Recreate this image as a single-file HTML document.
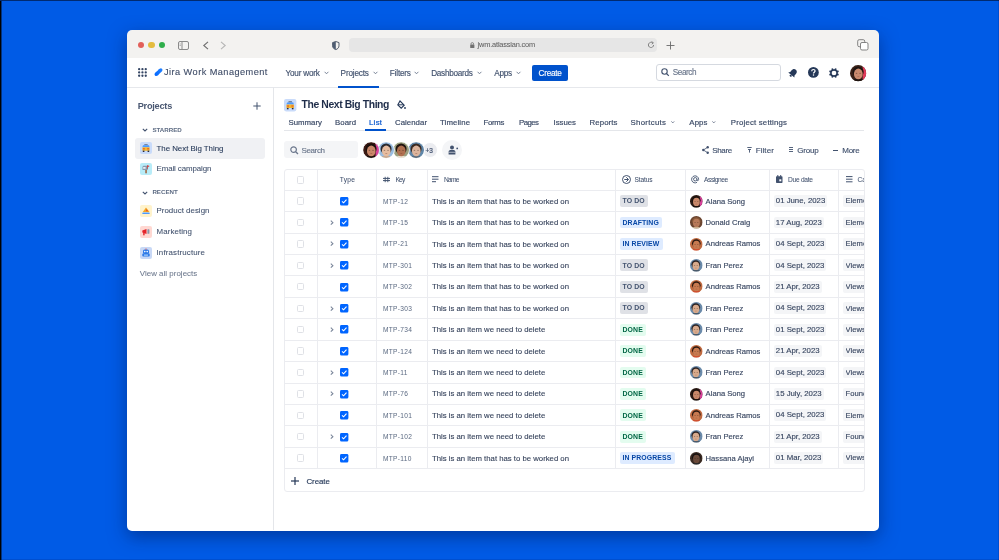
<!DOCTYPE html>
<html><head><meta charset="utf-8"><style>
html,body{margin:0;padding:0;width:999px;height:560px;overflow:hidden}
body{position:relative;font-family:"Liberation Sans",sans-serif}
.a{position:absolute}
.t{position:absolute;white-space:nowrap}
svg.a{overflow:visible}
</style></head><body><div class="a" style="left:0;top:0;width:999px;height:560px;filter:blur(0.25px)">
<div class="a" style="left:0;top:0;width:999px;height:560px;background:#005BE6"></div>
<div class="a" style="left:0px;top:0px;width:1px;height:560px;background:#000"></div>
<div class="a" style="left:1px;top:0px;width:1px;height:560px;background:rgba(0,0,0,0.45)"></div>
<div class="a" style="left:0px;top:0px;width:999px;height:1px;background:#002a70"></div>
<div class="a" style="left:998px;top:0px;width:1px;height:560px;background:rgba(0,0,40,0.12)"></div>
<div class="a" style="left:0px;top:559px;width:999px;height:1px;background:rgba(0,0,40,0.12)"></div>
<div class="a" style="left:127px;top:30px;width:752px;height:500.5px;border-radius:5px;background:linear-gradient(#F3F2F0 0,#F3F2F0 28px,#fff 28px);box-shadow:0 6px 18px rgba(0,25,90,0.5)"></div>
<div class="a" style="left:137.7px;top:41.6px;width:6.8px;height:6.8px;border-radius:50%;background:#E2605A"></div>
<div class="a" style="left:148.4px;top:41.6px;width:6.8px;height:6.8px;border-radius:50%;background:#E4BC3F"></div>
<div class="a" style="left:158.6px;top:41.6px;width:6.8px;height:6.8px;border-radius:50%;background:#2FAE4B"></div>
<svg class="a" style="left:178px;top:41px" width="11" height="9" viewBox="0 0 11 9"><rect x="0.5" y="0.5" width="10" height="8" rx="1.5" fill="none" stroke="#8a8a8a" stroke-width="1"/><line x1="4" y1="1" x2="4" y2="8" stroke="#8a8a8a" stroke-width="1"/><line x1="1.5" y1="3" x2="3" y2="3" stroke="#aaa" stroke-width="0.8"/><line x1="1.5" y1="4.5" x2="3" y2="4.5" stroke="#aaa" stroke-width="0.8"/></svg>
<svg class="a" style="left:202px;top:41px" width="8" height="9" viewBox="0 0 8 9"><polyline points="6,0.8 1.8,4.5 6,8.2" fill="none" stroke="#6d6d6d" stroke-width="1.1"/></svg>
<svg class="a" style="left:219px;top:41px" width="8" height="9" viewBox="0 0 8 9"><polyline points="2,0.8 6.2,4.5 2,8.2" fill="none" stroke="#b5b5b5" stroke-width="1.1"/></svg>
<svg class="a" style="left:331.5px;top:40.7px" width="7.6" height="9" viewBox="0 0 7.6 9"><path d="M3.8 0.5 L7 1.6 L7 4.8 C7 6.8 5.6 8 3.8 8.6 C2 8 0.6 6.8 0.6 4.8 L0.6 1.6 Z" fill="none" stroke="#56606e" stroke-width="1"/><path d="M3.8 0.5 L3.8 8.6 C2 8 0.6 6.8 0.6 4.8 L0.6 1.6 Z" fill="#4f5d72"/></svg>
<div class="a" style="left:348.8px;top:38.3px;width:308.6px;height:13.9px;border-radius:4px;background:#E6E6E6"></div>
<svg class="a" style="left:470.2px;top:42px" width="4.6" height="6.2" viewBox="0 0 4.6 6.2"><rect x="0.2" y="2.4" width="4.2" height="3.6" rx="0.6" fill="#707070"/><path d="M1 2.6 V1.9 A1.3 1.3 0 0 1 3.6 1.9 V2.6" fill="none" stroke="#707070" stroke-width="0.8"/></svg>
<div class="t" style="left:477.60px;top:41.41px;font-size:7.4px;line-height:8.88px;color:#606060;-webkit-text-stroke:0.05px #606060;letter-spacing:-0.178px;">jwm.atlassian.com</div>
<svg class="a" style="left:647px;top:41px" width="8" height="8" viewBox="0 0 8 8"><path d="M6.6 4 A2.6 2.6 0 1 1 5.6 1.9" fill="none" stroke="#777" stroke-width="0.9"/><path d="M4.6 0.6 L6.4 1.8 L4.8 3.2" fill="none" stroke="#777" stroke-width="0.9"/></svg>
<svg class="a" style="left:666.2px;top:40.6px" width="9" height="9" viewBox="0 0 9 9"><line x1="4.5" y1="0.5" x2="4.5" y2="8.5" stroke="#6a6a6a" stroke-width="0.9"/><line x1="0.5" y1="4.5" x2="8.5" y2="4.5" stroke="#6a6a6a" stroke-width="0.9"/></svg>
<svg class="a" style="left:857px;top:39px" width="12" height="12" viewBox="0 0 12 12"><rect x="0.7" y="0.7" width="7" height="7" rx="1.5" fill="#F3F2F0" stroke="#777" stroke-width="0.9"/><rect x="3.5" y="3.5" width="7.5" height="7.5" rx="1.5" fill="#fff" stroke="#777" stroke-width="0.9"/></svg>
<div class="a" style="left:127px;top:87px;width:752px;height:1px;background:#E6E8EC"></div>
<svg class="a" style="left:138.4px;top:68.4px" width="9" height="9" viewBox="0 0 9 9"><circle cx="1.15" cy="1.15" r="1.15" fill="#344563"/><circle cx="1.15" cy="4.45" r="1.15" fill="#344563"/><circle cx="1.15" cy="7.75" r="1.15" fill="#344563"/><circle cx="4.45" cy="1.15" r="1.15" fill="#344563"/><circle cx="4.45" cy="4.45" r="1.15" fill="#344563"/><circle cx="4.45" cy="7.75" r="1.15" fill="#344563"/><circle cx="7.75" cy="1.15" r="1.15" fill="#344563"/><circle cx="7.75" cy="4.45" r="1.15" fill="#344563"/><circle cx="7.75" cy="7.75" r="1.15" fill="#344563"/></svg>
<svg class="a" style="left:154px;top:67.5px" width="9" height="9" viewBox="0 0 9 9"><defs><linearGradient id="jg" x1="0" y1="1" x2="1" y2="0"><stop offset="0" stop-color="#0065FF"/><stop offset="1" stop-color="#2684FF"/></linearGradient></defs><path d="M1.2 7.8 C0.2 7.2 0.4 5.6 1.4 4.6 L3.8 2.6 C4.6 1.2 6 0.2 7.4 0.4 C8.8 0.8 8.8 2.4 7.8 3.6 L5.6 5.6 C4.8 7 2.8 8.6 1.2 7.8 Z" fill="url(#jg)"/></svg>
<div class="t" style="left:164.00px;top:67.14px;font-size:9.2px;line-height:11.04px;color:#3d4b66;-webkit-text-stroke:0.1px #3d4b66;letter-spacing:0.451px;">Jira Work Management</div>
<div class="t" style="left:285.50px;top:68.77px;font-size:8.2px;line-height:9.84px;color:#42526E;-webkit-text-stroke:0.15px #42526E;letter-spacing:-0.208px;">Your work</div>
<svg class="a" style="left:323.5px;top:71.2px" width="5" height="4" viewBox="0 0 5 4"><polyline points="0.6,0.8 2.5,2.8 4.4,0.8" fill="none" stroke="#6B778C" stroke-width="0.9"/></svg>
<div class="t" style="left:340.60px;top:68.77px;font-size:8.2px;line-height:9.84px;color:#42526E;-webkit-text-stroke:0.15px #42526E;letter-spacing:-0.175px;">Projects</div>
<svg class="a" style="left:372.7px;top:71.2px" width="5" height="4" viewBox="0 0 5 4"><polyline points="0.6,0.8 2.5,2.8 4.4,0.8" fill="none" stroke="#6B778C" stroke-width="0.9"/></svg>
<div class="t" style="left:389.80px;top:68.77px;font-size:8.2px;line-height:9.84px;color:#42526E;-webkit-text-stroke:0.15px #42526E;letter-spacing:-0.187px;">Filters</div>
<svg class="a" style="left:414.2px;top:71.2px" width="5" height="4" viewBox="0 0 5 4"><polyline points="0.6,0.8 2.5,2.8 4.4,0.8" fill="none" stroke="#6B778C" stroke-width="0.9"/></svg>
<div class="t" style="left:431.20px;top:68.77px;font-size:8.2px;line-height:9.84px;color:#42526E;-webkit-text-stroke:0.15px #42526E;letter-spacing:-0.280px;">Dashboards</div>
<svg class="a" style="left:477.4px;top:71.2px" width="5" height="4" viewBox="0 0 5 4"><polyline points="0.6,0.8 2.5,2.8 4.4,0.8" fill="none" stroke="#6B778C" stroke-width="0.9"/></svg>
<div class="t" style="left:494.20px;top:68.77px;font-size:8.2px;line-height:9.84px;color:#42526E;-webkit-text-stroke:0.15px #42526E;letter-spacing:-0.264px;">Apps</div>
<svg class="a" style="left:515.5px;top:71.2px" width="5" height="4" viewBox="0 0 5 4"><polyline points="0.6,0.8 2.5,2.8 4.4,0.8" fill="none" stroke="#6B778C" stroke-width="0.9"/></svg>
<div class="a" style="left:338.3px;top:85.5px;width:40.6px;height:2px;background:#0052CC"></div>
<div class="a" style="left:532.2px;top:64.8px;width:36px;height:16px;border-radius:2px;background:#0052CC"></div>
<div class="t" style="left:538.60px;top:68.57px;font-size:8.2px;line-height:9.84px;color:#ffffff;-webkit-text-stroke:0.15px #ffffff;letter-spacing:-0.283px;">Create</div>
<div class="a" style="left:656px;top:64px;width:124.7px;height:17.3px;border-radius:3px;background:#fff;border:1px solid #D5D9E0;box-sizing:border-box"></div>
<svg class="a" style="left:661.3px;top:68.2px" width="8.5" height="8.5" viewBox="0 0 8.5 8.5"><circle cx="3.5" cy="3.5" r="2.7" fill="none" stroke="#42526E" stroke-width="1.1"/><line x1="5.5" y1="5.5" x2="7.8" y2="7.8" stroke="#42526E" stroke-width="1.2"/></svg>
<div class="t" style="left:672.80px;top:68.17px;font-size:8.2px;line-height:9.84px;color:#6B778C;-webkit-text-stroke:0.15px #6B778C;letter-spacing:-0.436px;">Search</div>
<svg class="a" style="left:787.5px;top:67.5px" width="10" height="10" viewBox="0 0 10 10"><g transform="rotate(40 5 5)"><path d="M5 0.6 C3 0.6 2.2 2.2 2.2 3.8 V6 L1 7.6 H9 L7.8 6 V3.8 C7.8 2.2 7 0.6 5 0.6 Z" fill="#253858"/><ellipse cx="5" cy="8.6" rx="1.2" ry="0.9" fill="#253858"/></g></svg>
<svg class="a" style="left:808.2px;top:67.4px" width="10.8" height="10.8" viewBox="0 0 10.8 10.8"><circle cx="5.4" cy="5.4" r="5.4" fill="#253858"/><path d="M3.7 4.2 C3.7 3.1 4.5 2.5 5.4 2.5 C6.4 2.5 7.1 3.1 7.1 4 C7.1 5.2 5.5 5.3 5.5 6.5" fill="none" stroke="#fff" stroke-width="1.2"/><circle cx="5.5" cy="8.1" r="0.75" fill="#fff"/></svg>
<svg class="a" style="left:829.2px;top:67.6px" width="10" height="10" viewBox="0 0 10 10"><g transform="translate(5 5)"><rect x="-0.9" y="-4.9" width="1.8" height="2" fill="#253858" transform="rotate(22.5)"/><rect x="-0.9" y="-4.9" width="1.8" height="2" fill="#253858" transform="rotate(67.5)"/><rect x="-0.9" y="-4.9" width="1.8" height="2" fill="#253858" transform="rotate(112.5)"/><rect x="-0.9" y="-4.9" width="1.8" height="2" fill="#253858" transform="rotate(157.5)"/><rect x="-0.9" y="-4.9" width="1.8" height="2" fill="#253858" transform="rotate(202.5)"/><rect x="-0.9" y="-4.9" width="1.8" height="2" fill="#253858" transform="rotate(247.5)"/><rect x="-0.9" y="-4.9" width="1.8" height="2" fill="#253858" transform="rotate(292.5)"/><rect x="-0.9" y="-4.9" width="1.8" height="2" fill="#253858" transform="rotate(337.5)"/><circle r="3.1" fill="none" stroke="#253858" stroke-width="1.5"/></g></svg>
<svg class="a" style="left:849.85px;top:64.64999999999999px" width="16.3" height="16.3" viewBox="0 0 16.3 16.3"><defs><clipPath id="av1"><circle cx="8.15" cy="8.15" r="8.15"/></clipPath></defs><g clip-path="url(#av1)"><rect width="16.3" height="16.3" fill="#3a2218"/><rect x="12.714" y="0" width="3.5860000000000003" height="16.3" fill="#e23a5a"/><ellipse cx="8.15" cy="16.626" rx="6.9275" ry="2.8525" fill="#1f1410"/><ellipse cx="8.15" cy="6.9275" rx="5.542000000000001" ry="5.3790000000000004" fill="#1f1410"/><ellipse cx="8.313" cy="8.965000000000002" rx="4.401000000000001" ry="5.3790000000000004" fill="#c98a6e"/><ellipse cx="6.5200000000000005" cy="8.313" rx="0.8965000000000001" ry="0.489" fill="#2a1a12" opacity="0.55"/><ellipse cx="10.106" cy="8.313" rx="0.8965000000000001" ry="0.489" fill="#2a1a12" opacity="0.55"/><ellipse cx="8.313" cy="11.573" rx="1.304" ry="0.40750000000000003" fill="#7a3a2a" opacity="0.45"/></g></svg>
<div class="a" style="left:273px;top:87px;width:1px;height:443px;background:#E4E6EA"></div>
<div class="t" style="left:137.70px;top:101.04px;font-size:9.2px;line-height:11.04px;color:#4a5872;font-weight:bold;letter-spacing:-0.244px;">Projects</div>
<svg class="a" style="left:252.5px;top:102px" width="8" height="8" viewBox="0 0 8 8"><line x1="4" y1="0.3" x2="4" y2="7.7" stroke="#42526E" stroke-width="1"/><line x1="0.3" y1="4" x2="7.7" y2="4" stroke="#42526E" stroke-width="1"/></svg>
<svg class="a" style="left:141.5px;top:127.5px" width="6" height="4" viewBox="0 0 6 4"><polyline points="0.8,0.8 3,3 5.2,0.8" fill="none" stroke="#42526E" stroke-width="1.1"/></svg>
<div class="t" style="left:152.40px;top:125.53px;font-size:6.2px;line-height:7.44px;color:#5E6C84;font-weight:bold;letter-spacing:-0.001px;">STARRED</div>
<div class="a" style="left:135px;top:137.6px;width:130px;height:21px;border-radius:3px;background:#F0F1F4"></div>
<svg class="a" style="left:139.9px;top:141.9px" width="12" height="12" viewBox="0 0 12 12"><g transform="scale(1.0)"><rect width="12" height="12" rx="2" fill="#C9DBFA"/><path d="M4.5 2.2 H7.5 L8 3.3 H4 Z" fill="#5a6a80"/><path d="M3 3.3 H9 L9.6 5.3 H2.4 Z" fill="#4C9AFF"/><rect x="2.3" y="5.3" width="7.4" height="3.4" rx="0.6" fill="#F5B82E"/><rect x="3" y="6.2" width="1.8" height="1.2" fill="#E8542E"/><rect x="7.2" y="6.2" width="1.8" height="1.2" fill="#E8542E"/><rect x="2.8" y="8.6" width="1.6" height="1.4" fill="#2a2a3a"/><rect x="7.6" y="8.6" width="1.6" height="1.4" fill="#2a2a3a"/></g></svg>
<div class="t" style="left:156.50px;top:143.75px;font-size:7.9px;line-height:9.48px;color:#253858;-webkit-text-stroke:0.08px #253858;letter-spacing:-0.028px;">The Next Big Thing</div>
<svg class="a" style="left:139.9px;top:162.6px" width="12" height="12" viewBox="0 0 12 12"><g transform="scale(1.0)"><rect width="12" height="12" rx="2" fill="#B8ECF8"/><path d="M2.5 4.2 C2.5 3.2 3.3 2.8 4.2 2.8 H7.5 V7 H2.5 Z" fill="#8a9aac"/><rect x="3.2" y="4" width="2.4" height="1.8" fill="#e8eef4"/><path d="M7.5 2.2 L9.6 3 L7.5 4.6 Z" fill="#E8342E"/><rect x="7.2" y="2.2" width="0.6" height="4" fill="#c02a2a"/><rect x="5.3" y="7" width="1.5" height="3.3" fill="#A0603a"/></g></svg>
<div class="t" style="left:156.50px;top:164.05px;font-size:7.9px;line-height:9.48px;color:#42526E;-webkit-text-stroke:0.08px #42526E;letter-spacing:-0.093px;">Email campaign</div>
<svg class="a" style="left:141.5px;top:190.5px" width="6" height="4" viewBox="0 0 6 4"><polyline points="0.8,0.8 3,3 5.2,0.8" fill="none" stroke="#42526E" stroke-width="1.1"/></svg>
<div class="t" style="left:152.40px;top:188.43px;font-size:6.2px;line-height:7.44px;color:#5E6C84;font-weight:bold;letter-spacing:0.002px;">RECENT</div>
<svg class="a" style="left:139.9px;top:204.8px" width="12" height="12" viewBox="0 0 12 12"><g transform="scale(1.0)"><rect width="12" height="12" rx="2" fill="#FFF3CC"/><path d="M6 2.5 L9.5 7 H2.8 Z" fill="#F5A623"/><path d="M6.5 4 L8.2 6.2 H6 Z" fill="#E84A2E"/><rect x="2.3" y="7.6" width="7.4" height="1.5" rx="0.7" fill="#4C9AFF"/></g></svg>
<div class="t" style="left:156.50px;top:206.25px;font-size:7.9px;line-height:9.48px;color:#42526E;-webkit-text-stroke:0.08px #42526E;letter-spacing:0.023px;">Product design</div>
<svg class="a" style="left:139.9px;top:225.7px" width="12" height="12" viewBox="0 0 12 12"><g transform="scale(1.0)"><rect width="12" height="12" rx="2" fill="#FFD8D2"/><path d="M2.3 4.5 L6.5 3 V8 L2.3 6.5 Z" fill="#E5242A"/><rect x="3.2" y="6.5" width="1.4" height="2.8" fill="#E5242A"/><rect x="7.4" y="3.2" width="2" height="4.6" rx="0.5" fill="#8a96a8"/></g></svg>
<div class="t" style="left:156.50px;top:227.15px;font-size:7.9px;line-height:9.48px;color:#42526E;-webkit-text-stroke:0.08px #42526E;letter-spacing:0.102px;">Marketing</div>
<svg class="a" style="left:139.9px;top:246.7px" width="12" height="12" viewBox="0 0 12 12"><g transform="scale(1.0)"><rect width="12" height="12" rx="2" fill="#C8D8F6"/><rect x="3" y="2.5" width="6" height="4.5" rx="1.5" fill="#2F7BE8"/><circle cx="4.8" cy="4.6" r="0.8" fill="#fff"/><circle cx="7.2" cy="4.6" r="0.8" fill="#fff"/><rect x="2.3" y="6.6" width="7.4" height="3" rx="0.8" fill="#2F7BE8"/><rect x="4" y="7.6" width="4" height="1" fill="#bfe0ff"/><rect x="5.6" y="1.5" width="0.8" height="1.2" fill="#E5342A"/></g></svg>
<div class="t" style="left:156.50px;top:248.15px;font-size:7.9px;line-height:9.48px;color:#42526E;-webkit-text-stroke:0.08px #42526E;letter-spacing:0.151px;">Infrastructure</div>
<div class="t" style="left:139.80px;top:268.75px;font-size:7.9px;line-height:9.48px;color:#6B778C;-webkit-text-stroke:0.05px #6B778C;letter-spacing:0.035px;">View all projects</div>
<svg class="a" style="left:283.9px;top:98.9px" width="12.4" height="12.4" viewBox="0 0 12.4 12.4"><g transform="scale(1.0333333333333334)"><rect width="12" height="12" rx="2" fill="#C9DBFA"/><path d="M4.5 2.2 H7.5 L8 3.3 H4 Z" fill="#5a6a80"/><path d="M3 3.3 H9 L9.6 5.3 H2.4 Z" fill="#4C9AFF"/><rect x="2.3" y="5.3" width="7.4" height="3.4" rx="0.6" fill="#F5B82E"/><rect x="3" y="6.2" width="1.8" height="1.2" fill="#E8542E"/><rect x="7.2" y="6.2" width="1.8" height="1.2" fill="#E8542E"/><rect x="2.8" y="8.6" width="1.6" height="1.4" fill="#2a2a3a"/><rect x="7.6" y="8.6" width="1.6" height="1.4" fill="#2a2a3a"/></g></svg>
<div class="t" style="left:301.50px;top:99.12px;font-size:10.4px;line-height:12.48px;color:#1f2d4a;font-weight:bold;letter-spacing:-0.397px;">The Next Big Thing</div>
<svg class="a" style="left:396.5px;top:100px" width="9" height="9" viewBox="0 0 9 9"><path d="M3 1 L7.2 5.2 L4.2 8.2 L0.8 4.8 Z" fill="none" stroke="#253858" stroke-width="1.1"/><line x1="1" y1="4.8" x2="7" y2="4.8" stroke="#253858" stroke-width="1"/><circle cx="8" cy="8" r="0.9" fill="#253858"/></svg>
<div class="t" style="left:288.40px;top:117.74px;font-size:7.8px;line-height:9.36px;color:#3B4A66;-webkit-text-stroke:0.18px #3B4A66;letter-spacing:0.038px;">Summary</div>
<div class="t" style="left:335.00px;top:117.74px;font-size:7.8px;line-height:9.36px;color:#3B4A66;-webkit-text-stroke:0.18px #3B4A66;letter-spacing:0.046px;">Board</div>
<div class="t" style="left:369.00px;top:117.74px;font-size:7.8px;line-height:9.36px;color:#0052CC;-webkit-text-stroke:0.18px #0052CC;letter-spacing:0.287px;">List</div>
<div class="t" style="left:395.00px;top:117.74px;font-size:7.8px;line-height:9.36px;color:#3B4A66;-webkit-text-stroke:0.18px #3B4A66;letter-spacing:0.049px;">Calendar</div>
<div class="t" style="left:440.00px;top:117.74px;font-size:7.8px;line-height:9.36px;color:#3B4A66;-webkit-text-stroke:0.18px #3B4A66;letter-spacing:0.116px;">Timeline</div>
<div class="t" style="left:483.50px;top:117.74px;font-size:7.8px;line-height:9.36px;color:#3B4A66;-webkit-text-stroke:0.18px #3B4A66;letter-spacing:-0.275px;">Forms</div>
<div class="t" style="left:519.00px;top:117.74px;font-size:7.8px;line-height:9.36px;color:#3B4A66;-webkit-text-stroke:0.18px #3B4A66;letter-spacing:-0.529px;">Pages</div>
<div class="t" style="left:553.50px;top:117.74px;font-size:7.8px;line-height:9.36px;color:#3B4A66;-webkit-text-stroke:0.18px #3B4A66;letter-spacing:-0.009px;">Issues</div>
<div class="t" style="left:589.50px;top:117.74px;font-size:7.8px;line-height:9.36px;color:#3B4A66;-webkit-text-stroke:0.18px #3B4A66;letter-spacing:0.115px;">Reports</div>
<div class="t" style="left:630.50px;top:117.74px;font-size:7.8px;line-height:9.36px;color:#3B4A66;-webkit-text-stroke:0.18px #3B4A66;letter-spacing:0.319px;">Shortcuts</div>
<div class="t" style="left:689.30px;top:117.74px;font-size:7.8px;line-height:9.36px;color:#3B4A66;-webkit-text-stroke:0.18px #3B4A66;letter-spacing:0.140px;">Apps</div>
<div class="t" style="left:730.80px;top:117.74px;font-size:7.8px;line-height:9.36px;color:#3B4A66;-webkit-text-stroke:0.18px #3B4A66;letter-spacing:0.192px;">Project settings</div>
<svg class="a" style="left:670.6px;top:121px" width="3.6" height="2.4" viewBox="0 0 3.6 2.4"><polyline points="0.4,0.4 1.8,1.9 3.2,0.4" fill="none" stroke="#6B778C" stroke-width="0.9"/></svg>
<svg class="a" style="left:712px;top:121px" width="3.6" height="2.4" viewBox="0 0 3.6 2.4"><polyline points="0.4,0.4 1.8,1.9 3.2,0.4" fill="none" stroke="#6B778C" stroke-width="0.9"/></svg>
<div class="a" style="left:284px;top:129.5px;width:580px;height:1px;background:#E4E6EA"></div>
<div class="a" style="left:365px;top:128.8px;width:21.4px;height:1.8px;background:#0052CC"></div>
<div class="a" style="left:284px;top:141.2px;width:74px;height:17.3px;border-radius:3px;background:#F4F5F7"></div>
<svg class="a" style="left:289.5px;top:146px" width="9" height="9" viewBox="0 0 9 9"><circle cx="3.6" cy="3.6" r="2.8" fill="none" stroke="#6B778C" stroke-width="1.2"/><line x1="5.7" y1="5.7" x2="8" y2="8" stroke="#6B778C" stroke-width="1.3"/></svg>
<div class="t" style="left:301.40px;top:145.66px;font-size:8px;line-height:9.60px;color:#6B778C;-webkit-text-stroke:0.15px #6B778C;letter-spacing:-0.350px;">Search</div>
<div class="a" style="left:421.6px;top:141.7px;width:16.2px;height:16.2px;border-radius:50%;background:#EBECF0;border:1px solid #fff;box-sizing:border-box"></div>
<div class="t" style="left:425.40px;top:146.55px;font-size:6.5px;line-height:7.80px;color:#42526E;-webkit-text-stroke:0.2px #42526E;">+3</div>
<svg class="a" style="left:407.59999999999997px;top:141.70000000000002px" width="16.2" height="16.2" viewBox="0 0 16.2 16.2"><defs><clipPath id="av2"><circle cx="8.1" cy="8.1" r="8.1"/></clipPath></defs><g clip-path="url(#av2)"><rect width="16.2" height="16.2" fill="#5f86a8"/><ellipse cx="8.1" cy="16.524" rx="6.885" ry="2.8349999999999995" fill="#5a6a7a"/><ellipse cx="8.1" cy="6.885" rx="5.508" ry="5.346" fill="#3a2a22"/><ellipse cx="8.262" cy="8.91" rx="4.374" ry="5.346" fill="#dcb49c"/><ellipse cx="6.48" cy="8.262" rx="0.891" ry="0.486" fill="#2a1a12" opacity="0.55"/><ellipse cx="10.043999999999999" cy="8.262" rx="0.891" ry="0.486" fill="#2a1a12" opacity="0.55"/><ellipse cx="8.262" cy="11.501999999999999" rx="1.296" ry="0.405" fill="#7a3a2a" opacity="0.45"/></g><circle cx="8.1" cy="8.1" r="8.4" fill="none" stroke="#fff" stroke-width="0.8"/></svg>
<svg class="a" style="left:392.9px;top:141.70000000000002px" width="16.2" height="16.2" viewBox="0 0 16.2 16.2"><defs><clipPath id="av3"><circle cx="8.1" cy="8.1" r="8.1"/></clipPath></defs><g clip-path="url(#av3)"><rect width="16.2" height="16.2" fill="#9aa080"/><ellipse cx="8.1" cy="16.524" rx="6.885" ry="2.8349999999999995" fill="#e8e0d0"/><ellipse cx="8.1" cy="6.885" rx="5.508" ry="5.346" fill="#201410"/><ellipse cx="8.262" cy="8.91" rx="4.374" ry="5.346" fill="#b07050"/><ellipse cx="6.48" cy="8.262" rx="0.891" ry="0.486" fill="#2a1a12" opacity="0.55"/><ellipse cx="10.043999999999999" cy="8.262" rx="0.891" ry="0.486" fill="#2a1a12" opacity="0.55"/><ellipse cx="8.262" cy="11.501999999999999" rx="1.296" ry="0.405" fill="#7a3a2a" opacity="0.45"/></g><circle cx="8.1" cy="8.1" r="8.4" fill="none" stroke="#fff" stroke-width="0.8"/></svg>
<svg class="a" style="left:378.4px;top:141.70000000000002px" width="16.2" height="16.2" viewBox="0 0 16.2 16.2"><defs><clipPath id="av4"><circle cx="8.1" cy="8.1" r="8.1"/></clipPath></defs><g clip-path="url(#av4)"><rect width="16.2" height="16.2" fill="#98bce0"/><ellipse cx="8.1" cy="16.524" rx="6.885" ry="2.8349999999999995" fill="#c8a890"/><ellipse cx="8.1" cy="6.885" rx="5.508" ry="5.346" fill="#2a2a30"/><ellipse cx="8.262" cy="8.91" rx="4.374" ry="5.346" fill="#e6bca0"/><ellipse cx="6.48" cy="8.262" rx="0.891" ry="0.486" fill="#2a1a12" opacity="0.55"/><ellipse cx="10.043999999999999" cy="8.262" rx="0.891" ry="0.486" fill="#2a1a12" opacity="0.55"/><ellipse cx="8.262" cy="11.501999999999999" rx="1.296" ry="0.405" fill="#7a3a2a" opacity="0.45"/></g><circle cx="8.1" cy="8.1" r="8.4" fill="none" stroke="#fff" stroke-width="0.8"/></svg>
<svg class="a" style="left:362.79999999999995px;top:141.70000000000002px" width="16.2" height="16.2" viewBox="0 0 16.2 16.2"><defs><clipPath id="av5"><circle cx="8.1" cy="8.1" r="8.1"/></clipPath></defs><g clip-path="url(#av5)"><rect width="16.2" height="16.2" fill="#3a1a14"/><rect x="12.636" y="0" width="3.564" height="16.2" fill="#d8409a"/><ellipse cx="8.1" cy="16.524" rx="6.885" ry="2.8349999999999995" fill="#1a100c"/><ellipse cx="8.1" cy="6.885" rx="5.508" ry="5.346" fill="#1a100c"/><ellipse cx="8.262" cy="8.91" rx="4.374" ry="5.346" fill="#c9886a"/><ellipse cx="6.48" cy="8.262" rx="0.891" ry="0.486" fill="#2a1a12" opacity="0.55"/><ellipse cx="10.043999999999999" cy="8.262" rx="0.891" ry="0.486" fill="#2a1a12" opacity="0.55"/><ellipse cx="8.262" cy="11.501999999999999" rx="1.296" ry="0.405" fill="#7a3a2a" opacity="0.45"/></g><circle cx="8.1" cy="8.1" r="8.4" fill="none" stroke="#fff" stroke-width="0.8"/></svg>
<div class="a" style="left:442.4px;top:140px;width:20px;height:20px;border-radius:50%;background:#F4F5F7"></div>
<svg class="a" style="left:447.5px;top:145px" width="11" height="10" viewBox="0 0 11 10"><circle cx="4" cy="2.4" r="2" fill="#42526E"/><path d="M0.6 9.5 V7 C0.6 5.6 1.6 5 3 5 H5 C6.4 5 7.4 5.6 7.4 7 V9.5 Z" fill="#42526E"/><line x1="0.6" y1="7.3" x2="7.4" y2="7.3" stroke="#F4F5F7" stroke-width="0.6"/><circle cx="9.2" cy="3.4" r="0.9" fill="#42526E"/></svg>
<svg class="a" style="left:702px;top:146px" width="7" height="8" viewBox="0 0 7 8"><circle cx="5.7" cy="1.3" r="1.2" fill="#42526E"/><circle cx="1.3" cy="4" r="1.2" fill="#42526E"/><circle cx="5.7" cy="6.7" r="1.2" fill="#42526E"/><polyline points="5.7,1.3 1.3,4 5.7,6.7" fill="none" stroke="#42526E" stroke-width="0.8"/></svg>
<div class="t" style="left:712.20px;top:145.56px;font-size:8px;line-height:9.60px;color:#42526E;-webkit-text-stroke:0.15px #42526E;letter-spacing:-0.312px;">Share</div>
<svg class="a" style="left:747px;top:147px" width="5" height="6" viewBox="0 0 5 6"><line x1="0.3" y1="0.5" x2="4.7" y2="0.5" stroke="#42526E" stroke-width="0.9"/><line x1="1" y1="2.5" x2="4" y2="2.5" stroke="#42526E" stroke-width="0.9"/><line x1="2.5" y1="2.5" x2="2.5" y2="5.6" stroke="#42526E" stroke-width="0.9"/></svg>
<div class="t" style="left:755.80px;top:145.56px;font-size:8px;line-height:9.60px;color:#42526E;-webkit-text-stroke:0.15px #42526E;letter-spacing:0.044px;">Filter</div>
<svg class="a" style="left:788.5px;top:147.3px" width="4" height="5" viewBox="0 0 4 5"><line x1="0" y1="0.5" x2="4" y2="0.5" stroke="#42526E" stroke-width="0.9"/><line x1="0" y1="2.5" x2="4" y2="2.5" stroke="#42526E" stroke-width="0.9"/><line x1="0" y1="4.5" x2="4" y2="4.5" stroke="#42526E" stroke-width="0.9"/></svg>
<div class="t" style="left:797.20px;top:145.56px;font-size:8px;line-height:9.60px;color:#42526E;-webkit-text-stroke:0.15px #42526E;letter-spacing:-0.159px;">Group</div>
<div class="a" style="left:833.2px;top:149.6px;width:4.5px;height:1px;background:#42526E"></div>
<div class="t" style="left:842.30px;top:145.56px;font-size:8px;line-height:9.60px;color:#42526E;-webkit-text-stroke:0.15px #42526E;letter-spacing:-0.276px;">More</div>
<div class="a" style="left:284px;top:169px;width:580.5px;height:322.5px;border:1px solid #EBECF0;border-radius:3px;box-sizing:border-box"></div>
<div class="a" style="left:284.5px;top:189.5px;width:579.5px;height:1px;background:#EBECF0"></div>
<div class="a" style="left:284.5px;top:211.0px;width:579.5px;height:1px;background:#EBECF0"></div>
<div class="a" style="left:284.5px;top:232.5px;width:579.5px;height:1px;background:#EBECF0"></div>
<div class="a" style="left:284.5px;top:253.75px;width:579.5px;height:1px;background:#EBECF0"></div>
<div class="a" style="left:284.5px;top:275.25px;width:579.5px;height:1px;background:#EBECF0"></div>
<div class="a" style="left:284.5px;top:296.75px;width:579.5px;height:1px;background:#EBECF0"></div>
<div class="a" style="left:284.5px;top:318.0px;width:579.5px;height:1px;background:#EBECF0"></div>
<div class="a" style="left:284.5px;top:339.5px;width:579.5px;height:1px;background:#EBECF0"></div>
<div class="a" style="left:284.5px;top:361.0px;width:579.5px;height:1px;background:#EBECF0"></div>
<div class="a" style="left:284.5px;top:382.5px;width:579.5px;height:1px;background:#EBECF0"></div>
<div class="a" style="left:284.5px;top:403.75px;width:579.5px;height:1px;background:#EBECF0"></div>
<div class="a" style="left:284.5px;top:425.25px;width:579.5px;height:1px;background:#EBECF0"></div>
<div class="a" style="left:284.5px;top:446.75px;width:579.5px;height:1px;background:#EBECF0"></div>
<div class="a" style="left:284.5px;top:468.0px;width:579.5px;height:1px;background:#EBECF0"></div>
<div class="a" style="left:317.0px;top:169.5px;width:1px;height:299.4px;background:#EBECF0"></div>
<div class="a" style="left:376.3px;top:169.5px;width:1px;height:299.4px;background:#EBECF0"></div>
<div class="a" style="left:426.7px;top:169.5px;width:1px;height:299.4px;background:#EBECF0"></div>
<div class="a" style="left:615.1px;top:169.5px;width:1px;height:299.4px;background:#EBECF0"></div>
<div class="a" style="left:684.7px;top:169.5px;width:1px;height:299.4px;background:#EBECF0"></div>
<div class="a" style="left:769.3px;top:169.5px;width:1px;height:299.4px;background:#EBECF0"></div>
<div class="a" style="left:837.9px;top:169.5px;width:1px;height:299.4px;background:#EBECF0"></div>
<div class="a" style="left:297px;top:176.2px;width:7.4px;height:7.4px;border:1px solid #DFE1E6;border-radius:1.5px;box-sizing:border-box;background:#fff"></div>
<div class="t" style="left:339.80px;top:175.96px;font-size:6.6px;line-height:7.92px;color:#42526E;-webkit-text-stroke:0.05px #42526E;letter-spacing:0.297px;">Type</div>
<svg class="a" style="left:383.4px;top:176px" width="7" height="7" viewBox="0 0 7 7"><line x1="0" y1="2.4" x2="7" y2="2.4" stroke="#42526E" stroke-width="1"/><line x1="0" y1="4.6" x2="7" y2="4.6" stroke="#42526E" stroke-width="1"/><line x1="2.2" y1="0.8" x2="2.2" y2="6.2" stroke="#42526E" stroke-width="0.9"/><line x1="4.8" y1="0.8" x2="4.8" y2="6.2" stroke="#42526E" stroke-width="0.9"/></svg>
<div class="t" style="left:395.50px;top:175.96px;font-size:6.6px;line-height:7.92px;color:#42526E;-webkit-text-stroke:0.05px #42526E;letter-spacing:-0.787px;">Key</div>
<svg class="a" style="left:432.4px;top:176.3px" width="7" height="7" viewBox="0 0 7 7"><line x1="0" y1="0.7" x2="6.5" y2="0.7" stroke="#42526E" stroke-width="1"/><line x1="0" y1="3.2" x2="6.5" y2="3.2" stroke="#42526E" stroke-width="1"/><line x1="0" y1="5.7" x2="4" y2="5.7" stroke="#42526E" stroke-width="1"/></svg>
<div class="t" style="left:444.10px;top:175.96px;font-size:6.6px;line-height:7.92px;color:#42526E;-webkit-text-stroke:0.05px #42526E;letter-spacing:-0.735px;">Name</div>
<svg class="a" style="left:621.6px;top:175.2px" width="9" height="9" viewBox="0 0 9 9"><circle cx="4.5" cy="4.5" r="4" fill="none" stroke="#42526E" stroke-width="1"/><polyline points="4.3,2.3 6.5,4.5 4.3,6.7" fill="none" stroke="#42526E" stroke-width="1"/><line x1="2.3" y1="4.5" x2="6.3" y2="4.5" stroke="#42526E" stroke-width="1"/></svg>
<div class="t" style="left:634.60px;top:175.96px;font-size:6.6px;line-height:7.92px;color:#42526E;-webkit-text-stroke:0.05px #42526E;letter-spacing:-0.162px;">Status</div>
<svg class="a" style="left:691.4px;top:175.3px" width="8.5" height="8.5" viewBox="0 0 8.5 8.5"><circle cx="4.25" cy="4.25" r="1.7" fill="none" stroke="#42526E" stroke-width="0.9"/><path d="M6 4.2 V5 C6 6 7.6 6 7.6 4.5 V4.25 A3.5 3.5 0 1 0 6 7.3" fill="none" stroke="#42526E" stroke-width="0.9"/></svg>
<div class="t" style="left:704.00px;top:175.96px;font-size:6.6px;line-height:7.92px;color:#42526E;-webkit-text-stroke:0.05px #42526E;letter-spacing:-0.407px;">Assignee</div>
<svg class="a" style="left:776.4px;top:175px" width="6.5" height="8" viewBox="0 0 6.5 8"><rect x="0" y="1.2" width="6.5" height="6.8" rx="0.8" fill="#42526E"/><rect x="1.3" y="0" width="1" height="2" fill="#42526E"/><rect x="4.2" y="0" width="1" height="2" fill="#42526E"/><rect x="3.3" y="4.3" width="2" height="2" fill="#fff"/></svg>
<div class="t" style="left:788.00px;top:175.96px;font-size:6.6px;line-height:7.92px;color:#42526E;-webkit-text-stroke:0.05px #42526E;letter-spacing:-0.255px;">Due date</div>
<svg class="a" style="left:845.7px;top:176.2px" width="6.5" height="6.5" viewBox="0 0 6.5 6.5"><line x1="0" y1="0.6" x2="6.5" y2="0.6" stroke="#42526E" stroke-width="1"/><line x1="0" y1="3.2" x2="6.5" y2="3.2" stroke="#42526E" stroke-width="1"/><line x1="0" y1="5.8" x2="6.5" y2="5.8" stroke="#42526E" stroke-width="1"/></svg>
<div class="t" style="left:857.40px;top:175.96px;font-size:6.6px;line-height:7.92px;color:#42526E;-webkit-text-stroke:0.05px #42526E;width:6.6px;overflow:hidden">Category</div>
<div class="a" style="left:297px;top:197.4px;width:7.4px;height:7.4px;border:1px solid #DFE1E6;border-radius:1.5px;box-sizing:border-box;background:#fff"></div>
<svg class="a" style="left:339.6px;top:196.9px" width="8.4" height="8.4" viewBox="0 0 8.4 8.4"><rect x="0" y="0" width="8.4" height="8.4" rx="1.5" fill="#0065FF"/><polyline points="2,4.3 3.6,5.8 6.5,2.7" fill="none" stroke="#fff" stroke-width="1.1"/></svg>
<div class="t" style="left:383.00px;top:197.56px;font-size:6.6px;line-height:7.92px;color:#5E6C84;-webkit-text-stroke:0.02px #5E6C84;letter-spacing:0.3px;">MTP-12</div>
<div class="t" style="left:432.00px;top:196.69px;font-size:7.75px;line-height:9.30px;color:#34415a;-webkit-text-stroke:0.1px #34415a;">This is an item that has to be worked on</div>
<div class="a" style="left:620px;top:195.2px;width:28.158703125px;height:11.8px;border-radius:2px;background:#DFE1E6"></div>
<div class="t" style="left:622.50px;top:197.38px;font-size:6.9px;line-height:8.28px;color:#42526E;font-weight:bold;letter-spacing:0.109px;">TO DO</div>
<svg class="a" style="left:689.6px;top:194.79999999999998px" width="12.6" height="12.6" viewBox="0 0 12.6 12.6"><defs><clipPath id="av6"><circle cx="6.3" cy="6.3" r="6.3"/></clipPath></defs><g clip-path="url(#av6)"><rect width="12.6" height="12.6" fill="#2a1a14"/><rect x="9.828" y="0" width="2.772" height="12.6" fill="#d8409a"/><ellipse cx="6.3" cy="12.852" rx="5.3549999999999995" ry="2.2049999999999996" fill="#1a100c"/><ellipse cx="6.3" cy="5.3549999999999995" rx="4.284" ry="4.158" fill="#1a100c"/><ellipse cx="6.426" cy="6.930000000000001" rx="3.402" ry="4.158" fill="#c9886a"/><ellipse cx="5.04" cy="6.426" rx="0.693" ry="0.378" fill="#2a1a12" opacity="0.55"/><ellipse cx="7.811999999999999" cy="6.426" rx="0.693" ry="0.378" fill="#2a1a12" opacity="0.55"/><ellipse cx="6.426" cy="8.946" rx="1.008" ry="0.315" fill="#7a3a2a" opacity="0.45"/></g></svg>
<div class="t" style="left:705.60px;top:196.58px;font-size:7.65px;line-height:9.18px;color:#3a4862;-webkit-text-stroke:0.15px #3a4862;">Alana Song</div>
<div class="a" style="left:774px;top:195.2px;width:53.244078124999994px;height:11.8px;border-radius:2px;background:#F4F5F7"></div>
<div class="t" style="left:775.80px;top:196.24px;font-size:7.8px;line-height:9.36px;color:#3a4862;-webkit-text-stroke:0.15px #3a4862;">01 June, 2023</div>
<div class="a" style="left:843px;top:195.2px;width:21px;height:11.8px;border-radius:2px 0 0 2px;background:#F4F5F7"></div>
<div class="t" style="left:845.60px;top:196.43px;font-size:7.6px;line-height:9.12px;color:#3a4862;-webkit-text-stroke:0.15px #3a4862;width:18.4px;overflow:hidden">Elements</div>
<div class="a" style="left:297px;top:218.82px;width:7.4px;height:7.4px;border:1px solid #DFE1E6;border-radius:1.5px;box-sizing:border-box;background:#fff"></div>
<svg class="a" style="left:330px;top:219.82px" width="4" height="5.4" viewBox="0 0 4 5.4"><polyline points="0.8,0.7 2.9,2.7 0.8,4.7" fill="none" stroke="#7A869A" stroke-width="1.1"/></svg>
<svg class="a" style="left:339.6px;top:218.32px" width="8.4" height="8.4" viewBox="0 0 8.4 8.4"><rect x="0" y="0" width="8.4" height="8.4" rx="1.5" fill="#0065FF"/><polyline points="2,4.3 3.6,5.8 6.5,2.7" fill="none" stroke="#fff" stroke-width="1.1"/></svg>
<div class="t" style="left:383.00px;top:218.98px;font-size:6.6px;line-height:7.92px;color:#5E6C84;-webkit-text-stroke:0.02px #5E6C84;letter-spacing:0.3px;">MTP-15</div>
<div class="t" style="left:432.00px;top:218.11px;font-size:7.75px;line-height:9.30px;color:#34415a;-webkit-text-stroke:0.1px #34415a;">This is an item that has to be worked on</div>
<div class="a" style="left:620px;top:216.61999999999998px;width:42.358967812500005px;height:11.8px;border-radius:2px;background:#DEEBFF"></div>
<div class="t" style="left:622.50px;top:218.80px;font-size:6.9px;line-height:8.28px;color:#0747A6;font-weight:bold;letter-spacing:0.102px;">DRAFTING</div>
<svg class="a" style="left:689.6px;top:216.21999999999997px" width="12.6" height="12.6" viewBox="0 0 12.6 12.6"><defs><clipPath id="av7"><circle cx="6.3" cy="6.3" r="6.3"/></clipPath></defs><g clip-path="url(#av7)"><rect width="12.6" height="12.6" fill="#6a4430"/><ellipse cx="6.3" cy="12.852" rx="5.3549999999999995" ry="2.2049999999999996" fill="#c8b090"/><ellipse cx="6.3" cy="5.3549999999999995" rx="4.284" ry="4.158" fill="#8a5a3a"/><ellipse cx="6.426" cy="6.930000000000001" rx="3.402" ry="4.158" fill="#b87a5a"/><ellipse cx="5.04" cy="6.426" rx="0.693" ry="0.378" fill="#2a1a12" opacity="0.55"/><ellipse cx="7.811999999999999" cy="6.426" rx="0.693" ry="0.378" fill="#2a1a12" opacity="0.55"/><ellipse cx="6.426" cy="8.946" rx="1.008" ry="0.315" fill="#7a3a2a" opacity="0.45"/></g></svg>
<div class="t" style="left:705.60px;top:218.00px;font-size:7.65px;line-height:9.18px;color:#3a4862;-webkit-text-stroke:0.15px #3a4862;">Donald Craig</div>
<div class="a" style="left:774px;top:216.61999999999998px;width:49.77856249999999px;height:11.8px;border-radius:2px;background:#F4F5F7"></div>
<div class="t" style="left:775.80px;top:217.66px;font-size:7.8px;line-height:9.36px;color:#3a4862;-webkit-text-stroke:0.15px #3a4862;">17 Aug, 2023</div>
<div class="a" style="left:843px;top:216.61999999999998px;width:21px;height:11.8px;border-radius:2px 0 0 2px;background:#F4F5F7"></div>
<div class="t" style="left:845.60px;top:217.85px;font-size:7.6px;line-height:9.12px;color:#3a4862;-webkit-text-stroke:0.15px #3a4862;width:18.4px;overflow:hidden">Elements</div>
<div class="a" style="left:297px;top:240.24px;width:7.4px;height:7.4px;border:1px solid #DFE1E6;border-radius:1.5px;box-sizing:border-box;background:#fff"></div>
<svg class="a" style="left:330px;top:241.24px" width="4" height="5.4" viewBox="0 0 4 5.4"><polyline points="0.8,0.7 2.9,2.7 0.8,4.7" fill="none" stroke="#7A869A" stroke-width="1.1"/></svg>
<svg class="a" style="left:339.6px;top:239.74px" width="8.4" height="8.4" viewBox="0 0 8.4 8.4"><rect x="0" y="0" width="8.4" height="8.4" rx="1.5" fill="#0065FF"/><polyline points="2,4.3 3.6,5.8 6.5,2.7" fill="none" stroke="#fff" stroke-width="1.1"/></svg>
<div class="t" style="left:383.00px;top:240.40px;font-size:6.6px;line-height:7.92px;color:#5E6C84;-webkit-text-stroke:0.02px #5E6C84;letter-spacing:0.3px;">MTP-21</div>
<div class="t" style="left:432.00px;top:239.53px;font-size:7.75px;line-height:9.30px;color:#34415a;-webkit-text-stroke:0.1px #34415a;">This is an item that has to be worked on</div>
<div class="a" style="left:620px;top:238.04px;width:42.75760453125px;height:11.8px;border-radius:2px;background:#DEEBFF"></div>
<div class="t" style="left:622.50px;top:240.22px;font-size:6.9px;line-height:8.28px;color:#0747A6;font-weight:bold;letter-spacing:0.090px;">IN REVIEW</div>
<svg class="a" style="left:689.6px;top:237.64px" width="12.6" height="12.6" viewBox="0 0 12.6 12.6"><defs><clipPath id="av8"><circle cx="6.3" cy="6.3" r="6.3"/></clipPath></defs><g clip-path="url(#av8)"><rect width="12.6" height="12.6" fill="#c06a40"/><ellipse cx="6.3" cy="12.852" rx="5.3549999999999995" ry="2.2049999999999996" fill="#d05030"/><ellipse cx="6.3" cy="5.3549999999999995" rx="4.284" ry="4.158" fill="#2a1810"/><ellipse cx="6.426" cy="6.930000000000001" rx="3.402" ry="4.158" fill="#c87a50"/><ellipse cx="5.04" cy="6.426" rx="0.693" ry="0.378" fill="#2a1a12" opacity="0.55"/><ellipse cx="7.811999999999999" cy="6.426" rx="0.693" ry="0.378" fill="#2a1a12" opacity="0.55"/><ellipse cx="6.426" cy="8.946" rx="1.008" ry="0.315" fill="#7a3a2a" opacity="0.45"/></g></svg>
<div class="t" style="left:705.60px;top:239.42px;font-size:7.65px;line-height:9.18px;color:#3a4862;-webkit-text-stroke:0.15px #3a4862;">Andreas Ramos</div>
<div class="a" style="left:774px;top:238.04px;width:52.37571874999999px;height:11.8px;border-radius:2px;background:#F4F5F7"></div>
<div class="t" style="left:775.80px;top:239.08px;font-size:7.8px;line-height:9.36px;color:#3a4862;-webkit-text-stroke:0.15px #3a4862;">04 Sept, 2023</div>
<div class="a" style="left:843px;top:238.04px;width:21px;height:11.8px;border-radius:2px 0 0 2px;background:#F4F5F7"></div>
<div class="t" style="left:845.60px;top:239.27px;font-size:7.6px;line-height:9.12px;color:#3a4862;-webkit-text-stroke:0.15px #3a4862;width:18.4px;overflow:hidden">Elements</div>
<div class="a" style="left:297px;top:261.66px;width:7.4px;height:7.4px;border:1px solid #DFE1E6;border-radius:1.5px;box-sizing:border-box;background:#fff"></div>
<svg class="a" style="left:330px;top:262.66px" width="4" height="5.4" viewBox="0 0 4 5.4"><polyline points="0.8,0.7 2.9,2.7 0.8,4.7" fill="none" stroke="#7A869A" stroke-width="1.1"/></svg>
<svg class="a" style="left:339.6px;top:261.16px" width="8.4" height="8.4" viewBox="0 0 8.4 8.4"><rect x="0" y="0" width="8.4" height="8.4" rx="1.5" fill="#0065FF"/><polyline points="2,4.3 3.6,5.8 6.5,2.7" fill="none" stroke="#fff" stroke-width="1.1"/></svg>
<div class="t" style="left:383.00px;top:261.82px;font-size:6.6px;line-height:7.92px;color:#5E6C84;-webkit-text-stroke:0.02px #5E6C84;letter-spacing:0.3px;">MTP-301</div>
<div class="t" style="left:432.00px;top:260.95px;font-size:7.75px;line-height:9.30px;color:#34415a;-webkit-text-stroke:0.1px #34415a;">This is an item that has to be worked on</div>
<div class="a" style="left:620px;top:259.46000000000004px;width:28.158703125px;height:11.8px;border-radius:2px;background:#DFE1E6"></div>
<div class="t" style="left:622.50px;top:261.64px;font-size:6.9px;line-height:8.28px;color:#42526E;font-weight:bold;letter-spacing:0.109px;">TO DO</div>
<svg class="a" style="left:689.6px;top:259.06px" width="12.6" height="12.6" viewBox="0 0 12.6 12.6"><defs><clipPath id="av9"><circle cx="6.3" cy="6.3" r="6.3"/></clipPath></defs><g clip-path="url(#av9)"><rect width="12.6" height="12.6" fill="#6a8aaa"/><ellipse cx="5.796" cy="12.852" rx="5.3549999999999995" ry="2.2049999999999996" fill="#4a5a6a"/><ellipse cx="5.796" cy="5.3549999999999995" rx="4.284" ry="4.158" fill="#2a2222"/><ellipse cx="5.91192" cy="6.930000000000001" rx="3.402" ry="4.158" fill="#d8aa8c"/><ellipse cx="4.6368" cy="6.426" rx="0.693" ry="0.378" fill="#2a1a12" opacity="0.55"/><ellipse cx="7.1870400000000005" cy="6.426" rx="0.693" ry="0.378" fill="#2a1a12" opacity="0.55"/><ellipse cx="5.91192" cy="8.946" rx="1.008" ry="0.315" fill="#7a3a2a" opacity="0.45"/></g></svg>
<div class="t" style="left:705.60px;top:260.84px;font-size:7.65px;line-height:9.18px;color:#3a4862;-webkit-text-stroke:0.15px #3a4862;">Fran Perez</div>
<div class="a" style="left:774px;top:259.46000000000004px;width:52.37571874999999px;height:11.8px;border-radius:2px;background:#F4F5F7"></div>
<div class="t" style="left:775.80px;top:260.50px;font-size:7.8px;line-height:9.36px;color:#3a4862;-webkit-text-stroke:0.15px #3a4862;">04 Sept, 2023</div>
<div class="a" style="left:843px;top:259.46000000000004px;width:21px;height:11.8px;border-radius:2px 0 0 2px;background:#F4F5F7"></div>
<div class="t" style="left:845.60px;top:260.69px;font-size:7.6px;line-height:9.12px;color:#3a4862;-webkit-text-stroke:0.15px #3a4862;width:18.4px;overflow:hidden">Views</div>
<div class="a" style="left:297px;top:283.08000000000004px;width:7.4px;height:7.4px;border:1px solid #DFE1E6;border-radius:1.5px;box-sizing:border-box;background:#fff"></div>
<svg class="a" style="left:339.6px;top:282.58000000000004px" width="8.4" height="8.4" viewBox="0 0 8.4 8.4"><rect x="0" y="0" width="8.4" height="8.4" rx="1.5" fill="#0065FF"/><polyline points="2,4.3 3.6,5.8 6.5,2.7" fill="none" stroke="#fff" stroke-width="1.1"/></svg>
<div class="t" style="left:383.00px;top:283.24px;font-size:6.6px;line-height:7.92px;color:#5E6C84;-webkit-text-stroke:0.02px #5E6C84;letter-spacing:0.3px;">MTP-302</div>
<div class="t" style="left:432.00px;top:282.37px;font-size:7.75px;line-height:9.30px;color:#34415a;-webkit-text-stroke:0.1px #34415a;">This is an item that has to be worked on</div>
<div class="a" style="left:620px;top:280.88000000000005px;width:28.158703125px;height:11.8px;border-radius:2px;background:#DFE1E6"></div>
<div class="t" style="left:622.50px;top:283.06px;font-size:6.9px;line-height:8.28px;color:#42526E;font-weight:bold;letter-spacing:0.109px;">TO DO</div>
<svg class="a" style="left:689.6px;top:280.48px" width="12.6" height="12.6" viewBox="0 0 12.6 12.6"><defs><clipPath id="av10"><circle cx="6.3" cy="6.3" r="6.3"/></clipPath></defs><g clip-path="url(#av10)"><rect width="12.6" height="12.6" fill="#c06a40"/><ellipse cx="6.3" cy="12.852" rx="5.3549999999999995" ry="2.2049999999999996" fill="#d05030"/><ellipse cx="6.3" cy="5.3549999999999995" rx="4.284" ry="4.158" fill="#2a1810"/><ellipse cx="6.426" cy="6.930000000000001" rx="3.402" ry="4.158" fill="#c87a50"/><ellipse cx="5.04" cy="6.426" rx="0.693" ry="0.378" fill="#2a1a12" opacity="0.55"/><ellipse cx="7.811999999999999" cy="6.426" rx="0.693" ry="0.378" fill="#2a1a12" opacity="0.55"/><ellipse cx="6.426" cy="8.946" rx="1.008" ry="0.315" fill="#7a3a2a" opacity="0.45"/></g></svg>
<div class="t" style="left:705.60px;top:282.26px;font-size:7.65px;line-height:9.18px;color:#3a4862;-webkit-text-stroke:0.15px #3a4862;">Andreas Ramos</div>
<div class="a" style="left:774px;top:280.88000000000005px;width:47.60796875px;height:11.8px;border-radius:2px;background:#F4F5F7"></div>
<div class="t" style="left:775.80px;top:281.92px;font-size:7.8px;line-height:9.36px;color:#3a4862;-webkit-text-stroke:0.15px #3a4862;">21 Apr, 2023</div>
<div class="a" style="left:843px;top:280.88000000000005px;width:21px;height:11.8px;border-radius:2px 0 0 2px;background:#F4F5F7"></div>
<div class="t" style="left:845.60px;top:282.11px;font-size:7.6px;line-height:9.12px;color:#3a4862;-webkit-text-stroke:0.15px #3a4862;width:18.4px;overflow:hidden">Views</div>
<div class="a" style="left:297px;top:304.5px;width:7.4px;height:7.4px;border:1px solid #DFE1E6;border-radius:1.5px;box-sizing:border-box;background:#fff"></div>
<svg class="a" style="left:330px;top:305.5px" width="4" height="5.4" viewBox="0 0 4 5.4"><polyline points="0.8,0.7 2.9,2.7 0.8,4.7" fill="none" stroke="#7A869A" stroke-width="1.1"/></svg>
<svg class="a" style="left:339.6px;top:304.0px" width="8.4" height="8.4" viewBox="0 0 8.4 8.4"><rect x="0" y="0" width="8.4" height="8.4" rx="1.5" fill="#0065FF"/><polyline points="2,4.3 3.6,5.8 6.5,2.7" fill="none" stroke="#fff" stroke-width="1.1"/></svg>
<div class="t" style="left:383.00px;top:304.66px;font-size:6.6px;line-height:7.92px;color:#5E6C84;-webkit-text-stroke:0.02px #5E6C84;letter-spacing:0.3px;">MTP-303</div>
<div class="t" style="left:432.00px;top:303.79px;font-size:7.75px;line-height:9.30px;color:#34415a;-webkit-text-stroke:0.1px #34415a;">This is an item that has to be worked on</div>
<div class="a" style="left:620px;top:302.3px;width:28.158703125px;height:11.8px;border-radius:2px;background:#DFE1E6"></div>
<div class="t" style="left:622.50px;top:304.48px;font-size:6.9px;line-height:8.28px;color:#42526E;font-weight:bold;letter-spacing:0.109px;">TO DO</div>
<svg class="a" style="left:689.6px;top:301.9px" width="12.6" height="12.6" viewBox="0 0 12.6 12.6"><defs><clipPath id="av11"><circle cx="6.3" cy="6.3" r="6.3"/></clipPath></defs><g clip-path="url(#av11)"><rect width="12.6" height="12.6" fill="#6a8aaa"/><ellipse cx="5.796" cy="12.852" rx="5.3549999999999995" ry="2.2049999999999996" fill="#4a5a6a"/><ellipse cx="5.796" cy="5.3549999999999995" rx="4.284" ry="4.158" fill="#2a2222"/><ellipse cx="5.91192" cy="6.930000000000001" rx="3.402" ry="4.158" fill="#d8aa8c"/><ellipse cx="4.6368" cy="6.426" rx="0.693" ry="0.378" fill="#2a1a12" opacity="0.55"/><ellipse cx="7.1870400000000005" cy="6.426" rx="0.693" ry="0.378" fill="#2a1a12" opacity="0.55"/><ellipse cx="5.91192" cy="8.946" rx="1.008" ry="0.315" fill="#7a3a2a" opacity="0.45"/></g></svg>
<div class="t" style="left:705.60px;top:303.68px;font-size:7.65px;line-height:9.18px;color:#3a4862;-webkit-text-stroke:0.15px #3a4862;">Fran Perez</div>
<div class="a" style="left:774px;top:302.3px;width:52.37571874999999px;height:11.8px;border-radius:2px;background:#F4F5F7"></div>
<div class="t" style="left:775.80px;top:303.34px;font-size:7.8px;line-height:9.36px;color:#3a4862;-webkit-text-stroke:0.15px #3a4862;">04 Sept, 2023</div>
<div class="a" style="left:843px;top:302.3px;width:21px;height:11.8px;border-radius:2px 0 0 2px;background:#F4F5F7"></div>
<div class="t" style="left:845.60px;top:303.53px;font-size:7.6px;line-height:9.12px;color:#3a4862;-webkit-text-stroke:0.15px #3a4862;width:18.4px;overflow:hidden">Views</div>
<div class="a" style="left:297px;top:325.92px;width:7.4px;height:7.4px;border:1px solid #DFE1E6;border-radius:1.5px;box-sizing:border-box;background:#fff"></div>
<svg class="a" style="left:330px;top:326.92px" width="4" height="5.4" viewBox="0 0 4 5.4"><polyline points="0.8,0.7 2.9,2.7 0.8,4.7" fill="none" stroke="#7A869A" stroke-width="1.1"/></svg>
<svg class="a" style="left:339.6px;top:325.42px" width="8.4" height="8.4" viewBox="0 0 8.4 8.4"><rect x="0" y="0" width="8.4" height="8.4" rx="1.5" fill="#0065FF"/><polyline points="2,4.3 3.6,5.8 6.5,2.7" fill="none" stroke="#fff" stroke-width="1.1"/></svg>
<div class="t" style="left:383.00px;top:326.08px;font-size:6.6px;line-height:7.92px;color:#5E6C84;-webkit-text-stroke:0.02px #5E6C84;letter-spacing:0.3px;">MTP-734</div>
<div class="t" style="left:432.00px;top:325.21px;font-size:7.75px;line-height:9.30px;color:#34415a;-webkit-text-stroke:0.1px #34415a;">This is an item we need to delete</div>
<div class="a" style="left:620px;top:323.72px;width:26.3343215625px;height:11.8px;border-radius:2px;background:#E3FCEF"></div>
<div class="t" style="left:622.50px;top:325.90px;font-size:6.9px;line-height:8.28px;color:#006644;font-weight:bold;letter-spacing:0.133px;">DONE</div>
<svg class="a" style="left:689.6px;top:323.32px" width="12.6" height="12.6" viewBox="0 0 12.6 12.6"><defs><clipPath id="av12"><circle cx="6.3" cy="6.3" r="6.3"/></clipPath></defs><g clip-path="url(#av12)"><rect width="12.6" height="12.6" fill="#6a8aaa"/><ellipse cx="5.796" cy="12.852" rx="5.3549999999999995" ry="2.2049999999999996" fill="#4a5a6a"/><ellipse cx="5.796" cy="5.3549999999999995" rx="4.284" ry="4.158" fill="#2a2222"/><ellipse cx="5.91192" cy="6.930000000000001" rx="3.402" ry="4.158" fill="#d8aa8c"/><ellipse cx="4.6368" cy="6.426" rx="0.693" ry="0.378" fill="#2a1a12" opacity="0.55"/><ellipse cx="7.1870400000000005" cy="6.426" rx="0.693" ry="0.378" fill="#2a1a12" opacity="0.55"/><ellipse cx="5.91192" cy="8.946" rx="1.008" ry="0.315" fill="#7a3a2a" opacity="0.45"/></g></svg>
<div class="t" style="left:705.60px;top:325.10px;font-size:7.65px;line-height:9.18px;color:#3a4862;-webkit-text-stroke:0.15px #3a4862;">Fran Perez</div>
<div class="a" style="left:774px;top:323.72px;width:52.37571874999999px;height:11.8px;border-radius:2px;background:#F4F5F7"></div>
<div class="t" style="left:775.80px;top:324.76px;font-size:7.8px;line-height:9.36px;color:#3a4862;-webkit-text-stroke:0.15px #3a4862;">01 Sept, 2023</div>
<div class="a" style="left:843px;top:323.72px;width:21px;height:11.8px;border-radius:2px 0 0 2px;background:#F4F5F7"></div>
<div class="t" style="left:845.60px;top:324.95px;font-size:7.6px;line-height:9.12px;color:#3a4862;-webkit-text-stroke:0.15px #3a4862;width:18.4px;overflow:hidden">Views</div>
<div class="a" style="left:297px;top:347.34000000000003px;width:7.4px;height:7.4px;border:1px solid #DFE1E6;border-radius:1.5px;box-sizing:border-box;background:#fff"></div>
<svg class="a" style="left:339.6px;top:346.84000000000003px" width="8.4" height="8.4" viewBox="0 0 8.4 8.4"><rect x="0" y="0" width="8.4" height="8.4" rx="1.5" fill="#0065FF"/><polyline points="2,4.3 3.6,5.8 6.5,2.7" fill="none" stroke="#fff" stroke-width="1.1"/></svg>
<div class="t" style="left:383.00px;top:347.50px;font-size:6.6px;line-height:7.92px;color:#5E6C84;-webkit-text-stroke:0.02px #5E6C84;letter-spacing:0.3px;">MTP-124</div>
<div class="t" style="left:432.00px;top:346.63px;font-size:7.75px;line-height:9.30px;color:#34415a;-webkit-text-stroke:0.1px #34415a;">This is an item we need to delete</div>
<div class="a" style="left:620px;top:345.14000000000004px;width:26.3343215625px;height:11.8px;border-radius:2px;background:#E3FCEF"></div>
<div class="t" style="left:622.50px;top:347.32px;font-size:6.9px;line-height:8.28px;color:#006644;font-weight:bold;letter-spacing:0.133px;">DONE</div>
<svg class="a" style="left:689.6px;top:344.74px" width="12.6" height="12.6" viewBox="0 0 12.6 12.6"><defs><clipPath id="av13"><circle cx="6.3" cy="6.3" r="6.3"/></clipPath></defs><g clip-path="url(#av13)"><rect width="12.6" height="12.6" fill="#c06a40"/><ellipse cx="6.3" cy="12.852" rx="5.3549999999999995" ry="2.2049999999999996" fill="#d05030"/><ellipse cx="6.3" cy="5.3549999999999995" rx="4.284" ry="4.158" fill="#2a1810"/><ellipse cx="6.426" cy="6.930000000000001" rx="3.402" ry="4.158" fill="#c87a50"/><ellipse cx="5.04" cy="6.426" rx="0.693" ry="0.378" fill="#2a1a12" opacity="0.55"/><ellipse cx="7.811999999999999" cy="6.426" rx="0.693" ry="0.378" fill="#2a1a12" opacity="0.55"/><ellipse cx="6.426" cy="8.946" rx="1.008" ry="0.315" fill="#7a3a2a" opacity="0.45"/></g></svg>
<div class="t" style="left:705.60px;top:346.52px;font-size:7.65px;line-height:9.18px;color:#3a4862;-webkit-text-stroke:0.15px #3a4862;">Andreas Ramos</div>
<div class="a" style="left:774px;top:345.14000000000004px;width:47.60796875px;height:11.8px;border-radius:2px;background:#F4F5F7"></div>
<div class="t" style="left:775.80px;top:346.18px;font-size:7.8px;line-height:9.36px;color:#3a4862;-webkit-text-stroke:0.15px #3a4862;">21 Apr, 2023</div>
<div class="a" style="left:843px;top:345.14000000000004px;width:21px;height:11.8px;border-radius:2px 0 0 2px;background:#F4F5F7"></div>
<div class="t" style="left:845.60px;top:346.37px;font-size:7.6px;line-height:9.12px;color:#3a4862;-webkit-text-stroke:0.15px #3a4862;width:18.4px;overflow:hidden">Views</div>
<div class="a" style="left:297px;top:368.76px;width:7.4px;height:7.4px;border:1px solid #DFE1E6;border-radius:1.5px;box-sizing:border-box;background:#fff"></div>
<svg class="a" style="left:330px;top:369.76px" width="4" height="5.4" viewBox="0 0 4 5.4"><polyline points="0.8,0.7 2.9,2.7 0.8,4.7" fill="none" stroke="#7A869A" stroke-width="1.1"/></svg>
<svg class="a" style="left:339.6px;top:368.26px" width="8.4" height="8.4" viewBox="0 0 8.4 8.4"><rect x="0" y="0" width="8.4" height="8.4" rx="1.5" fill="#0065FF"/><polyline points="2,4.3 3.6,5.8 6.5,2.7" fill="none" stroke="#fff" stroke-width="1.1"/></svg>
<div class="t" style="left:383.00px;top:368.92px;font-size:6.6px;line-height:7.92px;color:#5E6C84;-webkit-text-stroke:0.02px #5E6C84;letter-spacing:0.3px;">MTP-11</div>
<div class="t" style="left:432.00px;top:368.05px;font-size:7.75px;line-height:9.30px;color:#34415a;-webkit-text-stroke:0.1px #34415a;">This is an item we need to delete</div>
<div class="a" style="left:620px;top:366.56px;width:26.3343215625px;height:11.8px;border-radius:2px;background:#E3FCEF"></div>
<div class="t" style="left:622.50px;top:368.74px;font-size:6.9px;line-height:8.28px;color:#006644;font-weight:bold;letter-spacing:0.133px;">DONE</div>
<svg class="a" style="left:689.6px;top:366.15999999999997px" width="12.6" height="12.6" viewBox="0 0 12.6 12.6"><defs><clipPath id="av14"><circle cx="6.3" cy="6.3" r="6.3"/></clipPath></defs><g clip-path="url(#av14)"><rect width="12.6" height="12.6" fill="#6a8aaa"/><ellipse cx="5.796" cy="12.852" rx="5.3549999999999995" ry="2.2049999999999996" fill="#4a5a6a"/><ellipse cx="5.796" cy="5.3549999999999995" rx="4.284" ry="4.158" fill="#2a2222"/><ellipse cx="5.91192" cy="6.930000000000001" rx="3.402" ry="4.158" fill="#d8aa8c"/><ellipse cx="4.6368" cy="6.426" rx="0.693" ry="0.378" fill="#2a1a12" opacity="0.55"/><ellipse cx="7.1870400000000005" cy="6.426" rx="0.693" ry="0.378" fill="#2a1a12" opacity="0.55"/><ellipse cx="5.91192" cy="8.946" rx="1.008" ry="0.315" fill="#7a3a2a" opacity="0.45"/></g></svg>
<div class="t" style="left:705.60px;top:367.94px;font-size:7.65px;line-height:9.18px;color:#3a4862;-webkit-text-stroke:0.15px #3a4862;">Fran Perez</div>
<div class="a" style="left:774px;top:366.56px;width:52.37571874999999px;height:11.8px;border-radius:2px;background:#F4F5F7"></div>
<div class="t" style="left:775.80px;top:367.60px;font-size:7.8px;line-height:9.36px;color:#3a4862;-webkit-text-stroke:0.15px #3a4862;">04 Sept, 2023</div>
<div class="a" style="left:843px;top:366.56px;width:21px;height:11.8px;border-radius:2px 0 0 2px;background:#F4F5F7"></div>
<div class="t" style="left:845.60px;top:367.79px;font-size:7.6px;line-height:9.12px;color:#3a4862;-webkit-text-stroke:0.15px #3a4862;width:18.4px;overflow:hidden">Views</div>
<div class="a" style="left:297px;top:390.18000000000006px;width:7.4px;height:7.4px;border:1px solid #DFE1E6;border-radius:1.5px;box-sizing:border-box;background:#fff"></div>
<svg class="a" style="left:330px;top:391.18000000000006px" width="4" height="5.4" viewBox="0 0 4 5.4"><polyline points="0.8,0.7 2.9,2.7 0.8,4.7" fill="none" stroke="#7A869A" stroke-width="1.1"/></svg>
<svg class="a" style="left:339.6px;top:389.68000000000006px" width="8.4" height="8.4" viewBox="0 0 8.4 8.4"><rect x="0" y="0" width="8.4" height="8.4" rx="1.5" fill="#0065FF"/><polyline points="2,4.3 3.6,5.8 6.5,2.7" fill="none" stroke="#fff" stroke-width="1.1"/></svg>
<div class="t" style="left:383.00px;top:390.34px;font-size:6.6px;line-height:7.92px;color:#5E6C84;-webkit-text-stroke:0.02px #5E6C84;letter-spacing:0.3px;">MTP-76</div>
<div class="t" style="left:432.00px;top:389.47px;font-size:7.75px;line-height:9.30px;color:#34415a;-webkit-text-stroke:0.1px #34415a;">This is an item we need to delete</div>
<div class="a" style="left:620px;top:387.9800000000001px;width:26.3343215625px;height:11.8px;border-radius:2px;background:#E3FCEF"></div>
<div class="t" style="left:622.50px;top:390.16px;font-size:6.9px;line-height:8.28px;color:#006644;font-weight:bold;letter-spacing:0.133px;">DONE</div>
<svg class="a" style="left:689.6px;top:387.58000000000004px" width="12.6" height="12.6" viewBox="0 0 12.6 12.6"><defs><clipPath id="av15"><circle cx="6.3" cy="6.3" r="6.3"/></clipPath></defs><g clip-path="url(#av15)"><rect width="12.6" height="12.6" fill="#2a1a14"/><rect x="9.828" y="0" width="2.772" height="12.6" fill="#d8409a"/><ellipse cx="6.3" cy="12.852" rx="5.3549999999999995" ry="2.2049999999999996" fill="#1a100c"/><ellipse cx="6.3" cy="5.3549999999999995" rx="4.284" ry="4.158" fill="#1a100c"/><ellipse cx="6.426" cy="6.930000000000001" rx="3.402" ry="4.158" fill="#c9886a"/><ellipse cx="5.04" cy="6.426" rx="0.693" ry="0.378" fill="#2a1a12" opacity="0.55"/><ellipse cx="7.811999999999999" cy="6.426" rx="0.693" ry="0.378" fill="#2a1a12" opacity="0.55"/><ellipse cx="6.426" cy="8.946" rx="1.008" ry="0.315" fill="#7a3a2a" opacity="0.45"/></g></svg>
<div class="t" style="left:705.60px;top:389.36px;font-size:7.65px;line-height:9.18px;color:#3a4862;-webkit-text-stroke:0.15px #3a4862;">Alana Song</div>
<div class="a" style="left:774px;top:387.9800000000001px;width:49.621953125px;height:11.8px;border-radius:2px;background:#F4F5F7"></div>
<div class="t" style="left:775.80px;top:389.02px;font-size:7.8px;line-height:9.36px;color:#3a4862;-webkit-text-stroke:0.15px #3a4862;">15 July, 2023</div>
<div class="a" style="left:843px;top:387.9800000000001px;width:21px;height:11.8px;border-radius:2px 0 0 2px;background:#F4F5F7"></div>
<div class="t" style="left:845.60px;top:389.21px;font-size:7.6px;line-height:9.12px;color:#3a4862;-webkit-text-stroke:0.15px #3a4862;width:18.4px;overflow:hidden">Foundations</div>
<div class="a" style="left:297px;top:411.6px;width:7.4px;height:7.4px;border:1px solid #DFE1E6;border-radius:1.5px;box-sizing:border-box;background:#fff"></div>
<svg class="a" style="left:339.6px;top:411.1px" width="8.4" height="8.4" viewBox="0 0 8.4 8.4"><rect x="0" y="0" width="8.4" height="8.4" rx="1.5" fill="#0065FF"/><polyline points="2,4.3 3.6,5.8 6.5,2.7" fill="none" stroke="#fff" stroke-width="1.1"/></svg>
<div class="t" style="left:383.00px;top:411.76px;font-size:6.6px;line-height:7.92px;color:#5E6C84;-webkit-text-stroke:0.02px #5E6C84;letter-spacing:0.3px;">MTP-101</div>
<div class="t" style="left:432.00px;top:410.89px;font-size:7.75px;line-height:9.30px;color:#34415a;-webkit-text-stroke:0.1px #34415a;">This is an item we need to delete</div>
<div class="a" style="left:620px;top:409.40000000000003px;width:26.3343215625px;height:11.8px;border-radius:2px;background:#E3FCEF"></div>
<div class="t" style="left:622.50px;top:411.58px;font-size:6.9px;line-height:8.28px;color:#006644;font-weight:bold;letter-spacing:0.133px;">DONE</div>
<svg class="a" style="left:689.6px;top:409.0px" width="12.6" height="12.6" viewBox="0 0 12.6 12.6"><defs><clipPath id="av16"><circle cx="6.3" cy="6.3" r="6.3"/></clipPath></defs><g clip-path="url(#av16)"><rect width="12.6" height="12.6" fill="#c06a40"/><ellipse cx="6.3" cy="12.852" rx="5.3549999999999995" ry="2.2049999999999996" fill="#d05030"/><ellipse cx="6.3" cy="5.3549999999999995" rx="4.284" ry="4.158" fill="#2a1810"/><ellipse cx="6.426" cy="6.930000000000001" rx="3.402" ry="4.158" fill="#c87a50"/><ellipse cx="5.04" cy="6.426" rx="0.693" ry="0.378" fill="#2a1a12" opacity="0.55"/><ellipse cx="7.811999999999999" cy="6.426" rx="0.693" ry="0.378" fill="#2a1a12" opacity="0.55"/><ellipse cx="6.426" cy="8.946" rx="1.008" ry="0.315" fill="#7a3a2a" opacity="0.45"/></g></svg>
<div class="t" style="left:705.60px;top:410.78px;font-size:7.65px;line-height:9.18px;color:#3a4862;-webkit-text-stroke:0.15px #3a4862;">Andreas Ramos</div>
<div class="a" style="left:774px;top:409.40000000000003px;width:52.37571874999999px;height:11.8px;border-radius:2px;background:#F4F5F7"></div>
<div class="t" style="left:775.80px;top:410.44px;font-size:7.8px;line-height:9.36px;color:#3a4862;-webkit-text-stroke:0.15px #3a4862;">04 Sept, 2023</div>
<div class="a" style="left:843px;top:409.40000000000003px;width:21px;height:11.8px;border-radius:2px 0 0 2px;background:#F4F5F7"></div>
<div class="t" style="left:845.60px;top:410.63px;font-size:7.6px;line-height:9.12px;color:#3a4862;-webkit-text-stroke:0.15px #3a4862;width:18.4px;overflow:hidden">Elements</div>
<div class="a" style="left:297px;top:433.02px;width:7.4px;height:7.4px;border:1px solid #DFE1E6;border-radius:1.5px;box-sizing:border-box;background:#fff"></div>
<svg class="a" style="left:330px;top:434.02px" width="4" height="5.4" viewBox="0 0 4 5.4"><polyline points="0.8,0.7 2.9,2.7 0.8,4.7" fill="none" stroke="#7A869A" stroke-width="1.1"/></svg>
<svg class="a" style="left:339.6px;top:432.52px" width="8.4" height="8.4" viewBox="0 0 8.4 8.4"><rect x="0" y="0" width="8.4" height="8.4" rx="1.5" fill="#0065FF"/><polyline points="2,4.3 3.6,5.8 6.5,2.7" fill="none" stroke="#fff" stroke-width="1.1"/></svg>
<div class="t" style="left:383.00px;top:433.18px;font-size:6.6px;line-height:7.92px;color:#5E6C84;-webkit-text-stroke:0.02px #5E6C84;letter-spacing:0.3px;">MTP-102</div>
<div class="t" style="left:432.00px;top:432.31px;font-size:7.75px;line-height:9.30px;color:#34415a;-webkit-text-stroke:0.1px #34415a;">This is an item we need to delete</div>
<div class="a" style="left:620px;top:430.82px;width:26.3343215625px;height:11.8px;border-radius:2px;background:#E3FCEF"></div>
<div class="t" style="left:622.50px;top:433.00px;font-size:6.9px;line-height:8.28px;color:#006644;font-weight:bold;letter-spacing:0.133px;">DONE</div>
<svg class="a" style="left:689.6px;top:430.41999999999996px" width="12.6" height="12.6" viewBox="0 0 12.6 12.6"><defs><clipPath id="av17"><circle cx="6.3" cy="6.3" r="6.3"/></clipPath></defs><g clip-path="url(#av17)"><rect width="12.6" height="12.6" fill="#6a8aaa"/><ellipse cx="5.796" cy="12.852" rx="5.3549999999999995" ry="2.2049999999999996" fill="#4a5a6a"/><ellipse cx="5.796" cy="5.3549999999999995" rx="4.284" ry="4.158" fill="#2a2222"/><ellipse cx="5.91192" cy="6.930000000000001" rx="3.402" ry="4.158" fill="#d8aa8c"/><ellipse cx="4.6368" cy="6.426" rx="0.693" ry="0.378" fill="#2a1a12" opacity="0.55"/><ellipse cx="7.1870400000000005" cy="6.426" rx="0.693" ry="0.378" fill="#2a1a12" opacity="0.55"/><ellipse cx="5.91192" cy="8.946" rx="1.008" ry="0.315" fill="#7a3a2a" opacity="0.45"/></g></svg>
<div class="t" style="left:705.60px;top:432.20px;font-size:7.65px;line-height:9.18px;color:#3a4862;-webkit-text-stroke:0.15px #3a4862;">Fran Perez</div>
<div class="a" style="left:774px;top:430.82px;width:47.60796875px;height:11.8px;border-radius:2px;background:#F4F5F7"></div>
<div class="t" style="left:775.80px;top:431.86px;font-size:7.8px;line-height:9.36px;color:#3a4862;-webkit-text-stroke:0.15px #3a4862;">21 Apr, 2023</div>
<div class="a" style="left:843px;top:430.82px;width:21px;height:11.8px;border-radius:2px 0 0 2px;background:#F4F5F7"></div>
<div class="t" style="left:845.60px;top:432.05px;font-size:7.6px;line-height:9.12px;color:#3a4862;-webkit-text-stroke:0.15px #3a4862;width:18.4px;overflow:hidden">Foundations</div>
<div class="a" style="left:297px;top:454.44000000000005px;width:7.4px;height:7.4px;border:1px solid #DFE1E6;border-radius:1.5px;box-sizing:border-box;background:#fff"></div>
<svg class="a" style="left:339.6px;top:453.94000000000005px" width="8.4" height="8.4" viewBox="0 0 8.4 8.4"><rect x="0" y="0" width="8.4" height="8.4" rx="1.5" fill="#0065FF"/><polyline points="2,4.3 3.6,5.8 6.5,2.7" fill="none" stroke="#fff" stroke-width="1.1"/></svg>
<div class="t" style="left:383.00px;top:454.60px;font-size:6.6px;line-height:7.92px;color:#5E6C84;-webkit-text-stroke:0.02px #5E6C84;letter-spacing:0.3px;">MTP-110</div>
<div class="t" style="left:432.00px;top:453.73px;font-size:7.75px;line-height:9.30px;color:#34415a;-webkit-text-stroke:0.1px #34415a;">This is an item that has to be worked on</div>
<div class="a" style="left:620px;top:452.24000000000007px;width:54.88550812500001px;height:11.8px;border-radius:2px;background:#DEEBFF"></div>
<div class="t" style="left:622.50px;top:454.42px;font-size:6.9px;line-height:8.28px;color:#0747A6;font-weight:bold;letter-spacing:0.096px;">IN PROGRESS</div>
<svg class="a" style="left:689.6px;top:451.84000000000003px" width="12.6" height="12.6" viewBox="0 0 12.6 12.6"><defs><clipPath id="av18"><circle cx="6.3" cy="6.3" r="6.3"/></clipPath></defs><g clip-path="url(#av18)"><rect width="12.6" height="12.6" fill="#3a2a22"/><ellipse cx="6.3" cy="12.852" rx="5.3549999999999995" ry="2.2049999999999996" fill="#2a2a2a"/><ellipse cx="6.3" cy="5.3549999999999995" rx="4.284" ry="4.158" fill="#151010"/><ellipse cx="6.426" cy="6.930000000000001" rx="3.402" ry="4.158" fill="#6a4a3a"/><ellipse cx="5.04" cy="6.426" rx="0.693" ry="0.378" fill="#2a1a12" opacity="0.55"/><ellipse cx="7.811999999999999" cy="6.426" rx="0.693" ry="0.378" fill="#2a1a12" opacity="0.55"/><ellipse cx="6.426" cy="8.946" rx="1.008" ry="0.315" fill="#7a3a2a" opacity="0.45"/></g></svg>
<div class="t" style="left:705.60px;top:453.62px;font-size:7.65px;line-height:9.18px;color:#3a4862;-webkit-text-stroke:0.15px #3a4862;">Hassana Ajayi</div>
<div class="a" style="left:774px;top:452.24000000000007px;width:49.33310937499999px;height:11.8px;border-radius:2px;background:#F4F5F7"></div>
<div class="t" style="left:775.80px;top:453.28px;font-size:7.8px;line-height:9.36px;color:#3a4862;-webkit-text-stroke:0.15px #3a4862;">01 Mar, 2023</div>
<div class="a" style="left:843px;top:452.24000000000007px;width:21px;height:11.8px;border-radius:2px 0 0 2px;background:#F4F5F7"></div>
<div class="t" style="left:845.60px;top:453.47px;font-size:7.6px;line-height:9.12px;color:#3a4862;-webkit-text-stroke:0.15px #3a4862;width:18.4px;overflow:hidden">Views</div>
<svg class="a" style="left:291px;top:476.8px" width="8" height="8" viewBox="0 0 8 8"><line x1="4" y1="0" x2="4" y2="8" stroke="#253858" stroke-width="1.2"/><line x1="0" y1="4" x2="8" y2="4" stroke="#253858" stroke-width="1.2"/></svg>
<div class="t" style="left:306.40px;top:476.65px;font-size:7.9px;line-height:9.48px;color:#253858;-webkit-text-stroke:0.15px #253858;letter-spacing:-0.042px;">Create</div>
</div></body></html>
